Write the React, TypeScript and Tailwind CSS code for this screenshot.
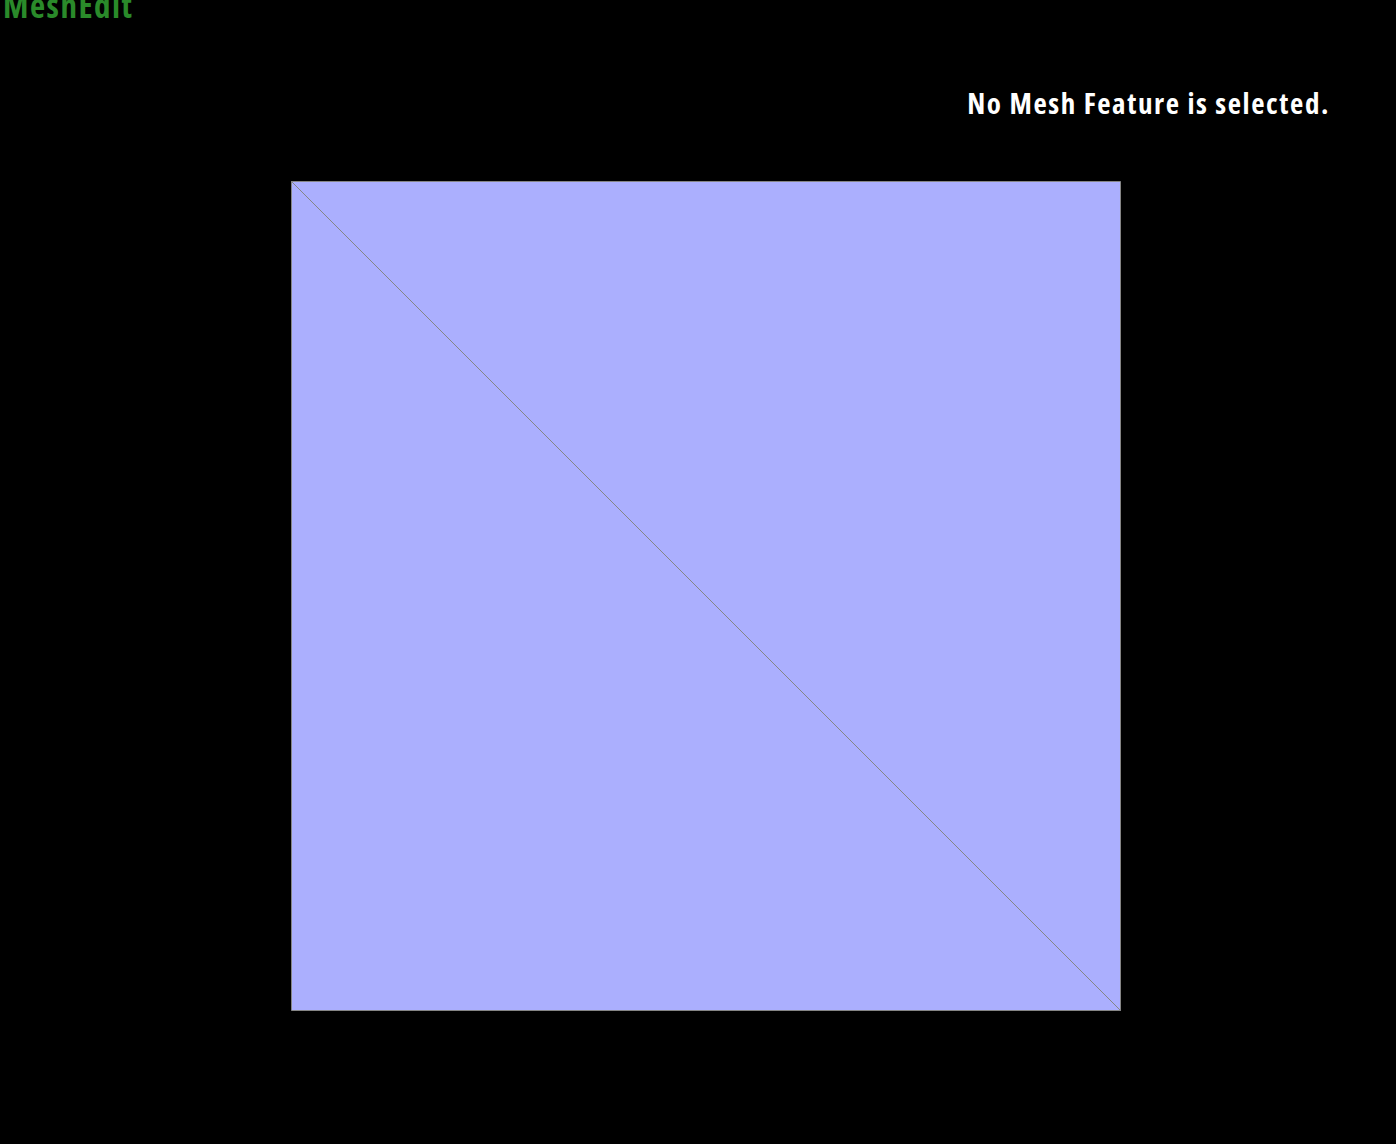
export default function App() {
  return (
    <div className="relative h-[1144px] w-[1396px] overflow-hidden bg-black">
      {/* mesh viewport */}
      <svg width="1396" height="1144" className="block">
        <polygon points="291.5,181.5 1120.5,181.5 1120.5,1010.5" fill="#abaffe" stroke="#858585" strokeWidth="1" />
        <polygon points="291.5,181.5 1120.5,1010.5 291.5,1010.5" fill="#abaffe" stroke="#858585" strokeWidth="1" />
      </svg>

      {/* overlays */}
      <div
        className="absolute left-[3px] top-[-11px] text-[33px] font-bold leading-none tracking-[1.5px] text-[#2a8a2a]"
        style={{ fontFamily: '"Open Sans", sans-serif', fontStretch: "75%" }}
      >
        MeshEdit
      </div>
      <div
        className="absolute right-[66px] top-[88px] text-[29px] font-bold leading-none tracking-[1.6px] text-white"
        style={{ fontFamily: '"Open Sans", sans-serif', fontStretch: "75%" }}
      >
        No Mesh Feature is selected.
      </div>
    </div>
  );
}
